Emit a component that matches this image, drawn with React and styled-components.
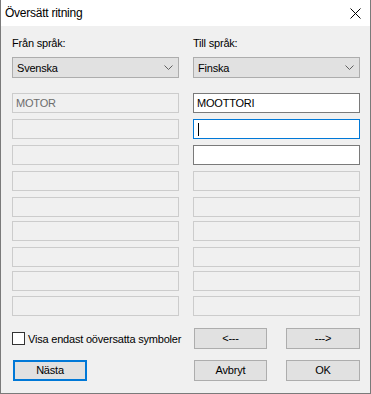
import styled, { createGlobalStyle } from 'styled-components';

const GlobalStyle = createGlobalStyle`
	html, body {
		margin: 0;
		padding: 0;
		background: #f0f0f0;
	}
	* {
		box-sizing: border-box;
	}
`;

const Window = styled.div`
	width: 371px;
	height: 394px;
	background: #f0f0f0;
	border: 1px solid #7a7a7a;
	border-top: none;
	font-family: 'Liberation Sans', Arial, sans-serif;
	font-size: 11px;
	letter-spacing: -0.2px;
	color: #000;
	display: flex;
	flex-direction: column;
`;

const TitleBar = styled.div`
	height: 26px;
	background: #fff;
	display: flex;
	align-items: center;
	justify-content: space-between;
	padding: 0 9px 0 4px;
	font-size: 12px;
	letter-spacing: -0.25px;
	flex-shrink: 0;
`;

const CloseButton = styled.div`
	width: 12px;
	height: 12px;
	display: flex;
	align-items: center;
	justify-content: center;
	margin-top: 1px;
`;

const Body = styled.div`
	padding: 11px 10px 0 11px;
	display: grid;
	grid-template-columns: 167px 167px;
	column-gap: 14px;
`;

const Column = styled.div`
	display: flex;
	flex-direction: column;
`;

const Label = styled.div`
	height: 13px;
	line-height: 13px;
`;

const Combo = styled.div`
	margin-top: 7px;
	height: 21px;
	background: #e1e1e1;
	border: 1px solid #adadad;
	display: flex;
	align-items: center;
	justify-content: space-between;
	padding: 0 5px 0 4px;
`;

const FieldList = styled.div`
	margin-top: 15px;
	display: flex;
	flex-direction: column;
`;

const Field = styled.div`
	height: 20px;
	margin-top: ${(p) => p.$gap}px;
	border: 1px solid
		${(p) =>
			p.$focused ? '#0078d7' : p.$enabled ? '#7a7a7a' : '#cccccc'};
	background: ${(p) => (p.$enabled ? '#fff' : '#f0f0f0')};
	color: ${(p) => (p.$enabled ? '#000' : '#6d6d6d')};
	display: flex;
	align-items: center;
	padding-left: 3px;
	line-height: 13px;
`;

const Caret = styled.span`
	width: 1px;
	height: 13px;
	background: #000;
	margin-left: 1px;
`;

const Footer = styled.div`
	padding: 12px 10px 0 11px;
	display: grid;
	grid-template-columns: 167px 167px;
	column-gap: 14px;
	row-gap: 11px;
`;

const CheckRow = styled.label`
	display: flex;
	align-items: center;
	gap: 3px;
	white-space: nowrap;
`;

const CheckBox = styled.span`
	width: 13px;
	height: 13px;
	border: 1px solid #333;
	background: #fff;
	flex-shrink: 0;
`;

const ButtonPair = styled.div`
	display: flex;
	justify-content: space-between;
	padding-left: 1px;
`;

const Button = styled.div`
	width: ${(p) => p.$width || 73}px;
	height: 21px;
	background: #e1e1e1;
	border: ${(p) => (p.$default ? '2px solid #0078d7' : '1px solid #adadad')};
	margin-left: ${(p) => (p.$default ? 1 : 0)}px;
	display: flex;
	align-items: center;
	justify-content: center;
	line-height: 13px;
`;

const gaps = [0, 6, 6, 6, 6, 4, 6, 4, 5];

const Chevron = () => (
	<svg width="9" height="5" viewBox="0 0 9 5">
		<path d="M0.5 0.5 L4.5 4.5 L8.5 0.5" fill="none" stroke="#606060" strokeWidth="1" />
	</svg>
);

const App = () => {
	return (
		<>
			<GlobalStyle />
			<Window>
				<TitleBar>
					<span>Översätt ritning</span>
					<CloseButton>
						<svg width="11" height="11" viewBox="0 0 11 11">
							<path d="M0.5 0.5 L10.5 10.5 M10.5 0.5 L0.5 10.5" stroke="#000" strokeWidth="1" />
						</svg>
					</CloseButton>
				</TitleBar>
				<Body>
					<Column>
						<Label>Från språk:</Label>
						<Combo>
							<span>Svenska</span>
							<Chevron />
						</Combo>
						<FieldList>
							{gaps.map((g, i) => (
								<Field key={i} $gap={g}>
									{i === 0 ? 'MOTOR' : ''}
								</Field>
							))}
						</FieldList>
					</Column>
					<Column>
						<Label>Till språk:</Label>
						<Combo>
							<span>Finska</span>
							<Chevron />
						</Combo>
						<FieldList>
							{gaps.map((g, i) => (
								<Field key={i} $gap={g} $enabled={i < 3} $focused={i === 1}>
									{i === 0 && 'MOOTTORI'}
									{i === 1 && <Caret />}
								</Field>
							))}
						</FieldList>
					</Column>
				</Body>
				<Footer>
					<CheckRow>
						<CheckBox />
						<span>Visa endast oöversatta symboler</span>
					</CheckRow>
					<ButtonPair>
						<Button>&lt;---</Button>
						<Button $width={74}>---&gt;</Button>
					</ButtonPair>
					<div>
						<Button $default $width={74}>Nästa</Button>
					</div>
					<ButtonPair>
						<Button>Avbryt</Button>
						<Button $width={74}>OK</Button>
					</ButtonPair>
				</Footer>
			</Window>
		</>
	);
};

export default App;
